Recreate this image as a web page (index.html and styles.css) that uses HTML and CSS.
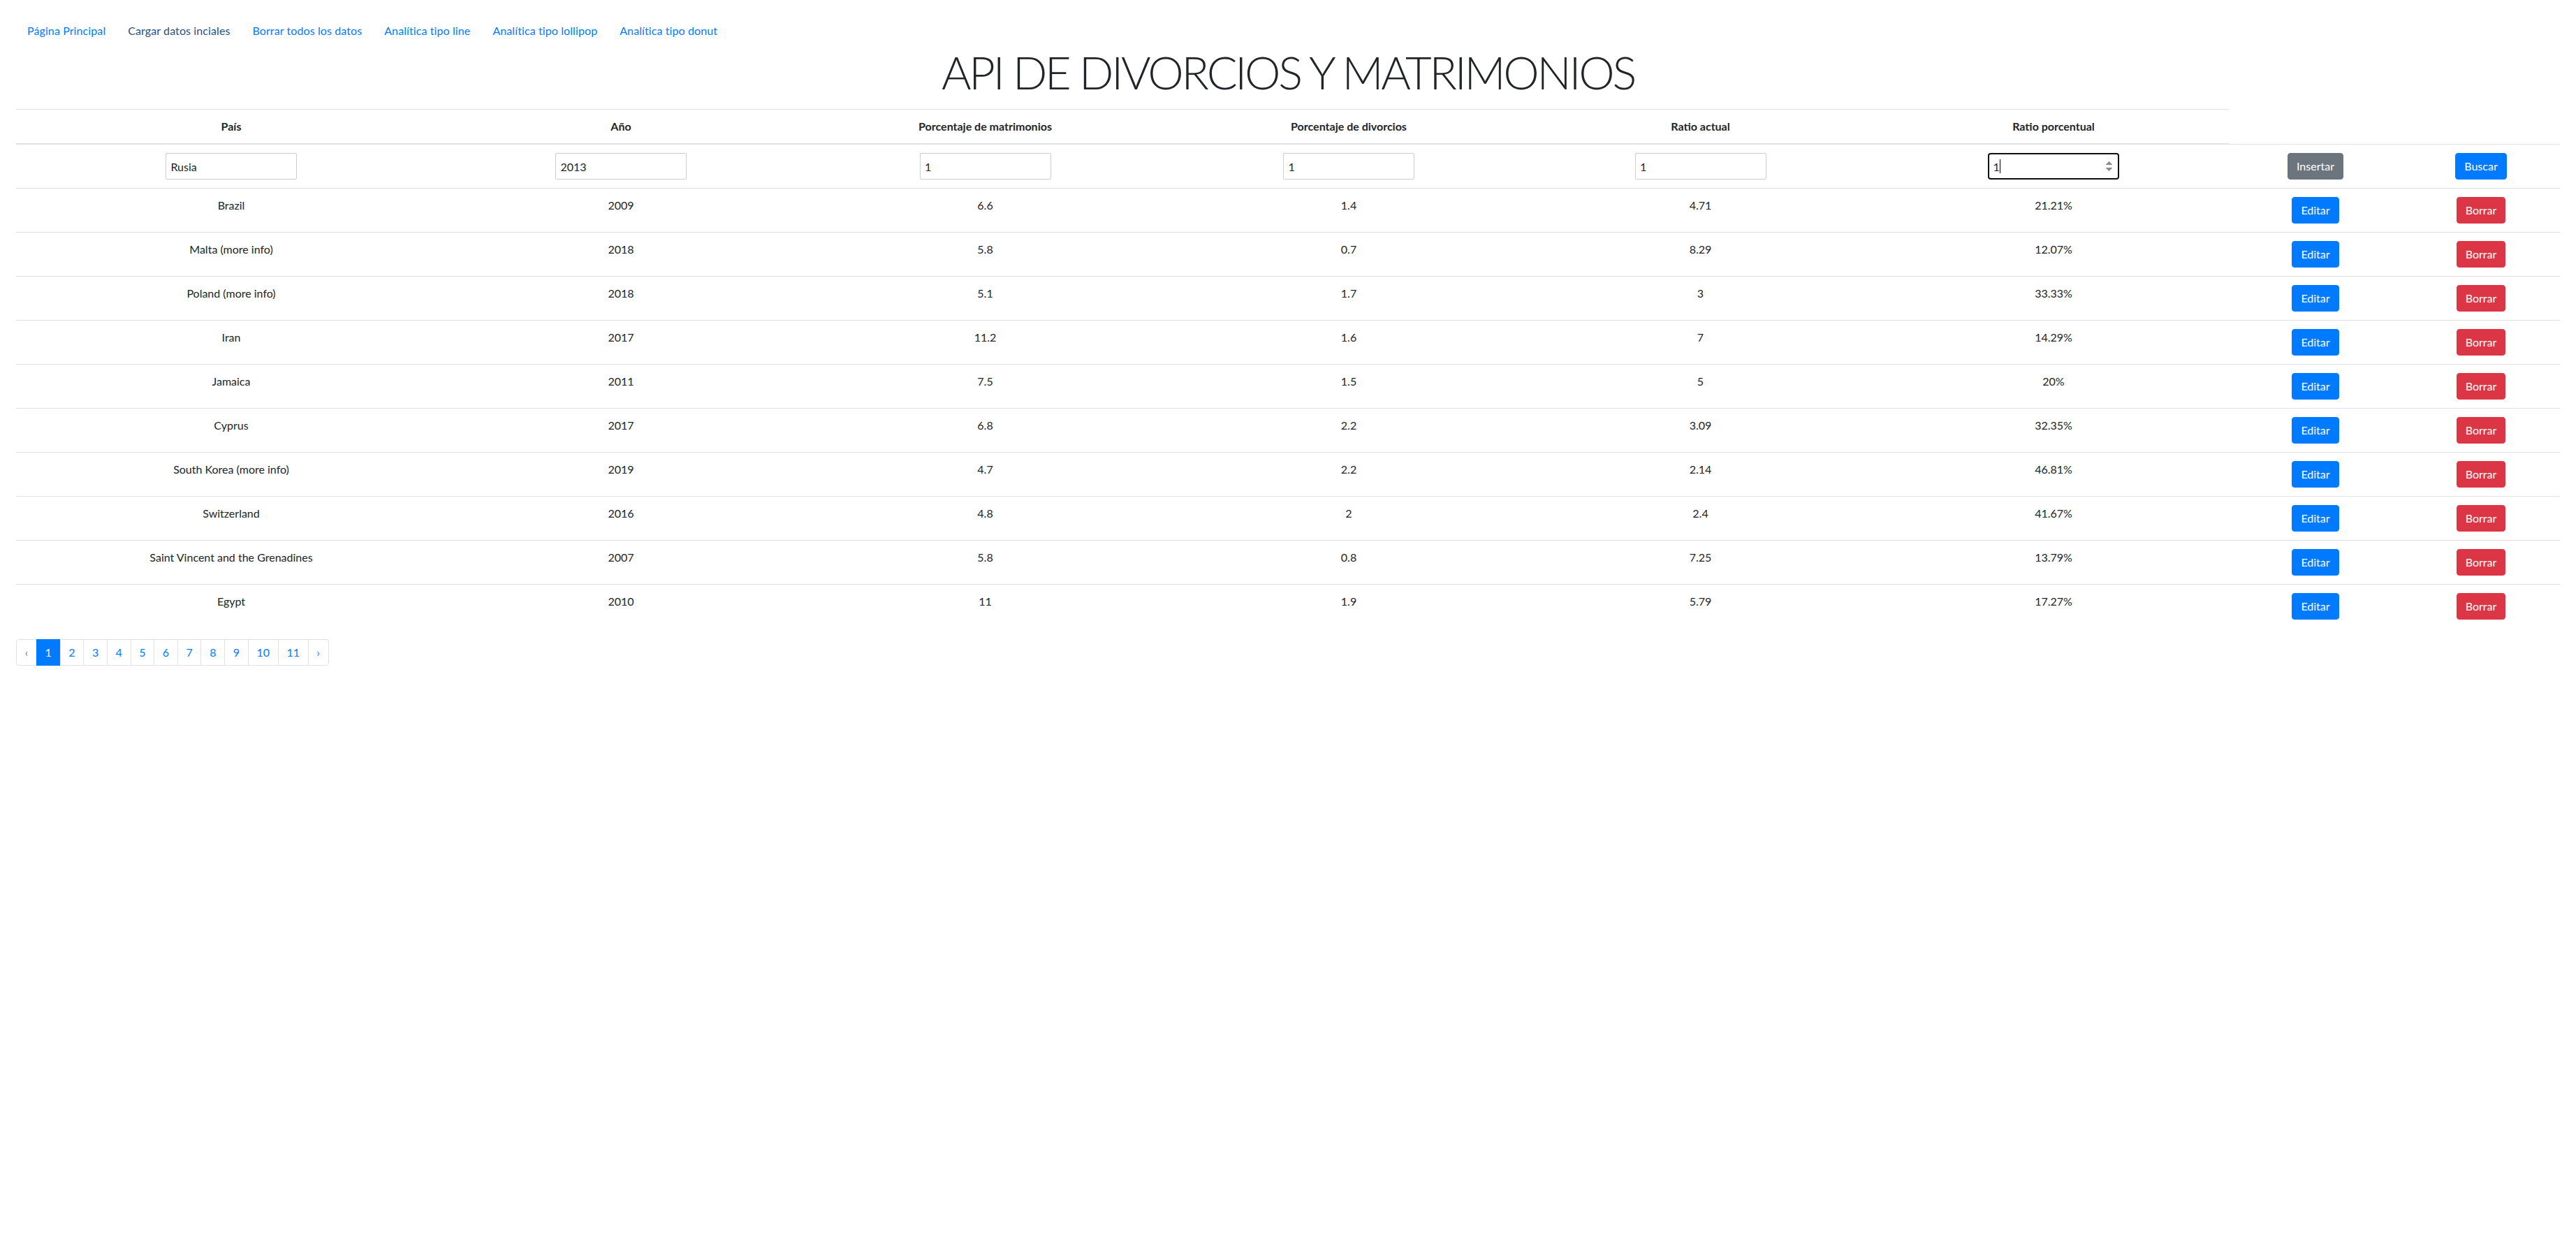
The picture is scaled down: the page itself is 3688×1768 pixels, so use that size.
FILE: index.html
```html
<!DOCTYPE html>
<html lang="es">
<head>
<meta charset="utf-8">
<title>API de divorcios y matrimonios</title>
<link rel="stylesheet" href="styles.css">
</head>
<body>
<div class="container">
  <ul class="nav">
    <li><a class="nav-link" href="#">Página Principal</a></li>
    <li><a class="nav-link nav-visited" href="#">Cargar datos inciales</a></li>
    <li><a class="nav-link" href="#">Borrar todos los datos</a></li>
    <li><a class="nav-link" href="#">Analítica tipo line</a></li>
    <li><a class="nav-link" href="#">Analítica tipo lollipop</a></li>
    <li><a class="nav-link" href="#">Analítica tipo donut</a></li>
  </ul>
  <h1 class="title">API DE DIVORCIOS Y MATRIMONIOS</h1>
  <table class="data-table">
    <colgroup>
      <col class="w1"><col class="w2"><col class="w3"><col class="w4"><col class="w5"><col class="w6"><col class="w7"><col class="w8">
    </colgroup>
    <thead>
      <tr><th>País</th><th>Año</th><th>Porcentaje de matrimonios</th><th>Porcentaje de divorcios</th><th>Ratio actual</th><th>Ratio porcentual</th></tr>
    </thead>
    <tbody>
      <tr>
        <td><input class="field" type="text" value="Rusia"></td>
        <td><input class="field" type="number" value="2013"></td>
        <td><input class="field" type="number" value="1"></td>
        <td><input class="field" type="number" value="1"></td>
        <td><input class="field" type="number" value="1"></td>
        <td><span class="num-wrap"><input class="field field-focus" type="number" value="1"><span class="caret"></span></span></td>
        <td><button class="btn btn-secondary">Insertar</button></td>
        <td><button class="btn btn-primary">Buscar</button></td>
      </tr>
      <tr><td>Brazil</td><td>2009</td><td>6.6</td><td>1.4</td><td>4.71</td><td>21.21%</td><td><button class="btn btn-primary">Editar</button></td><td><button class="btn btn-danger">Borrar</button></td></tr>
      <tr><td>Malta <span class="more">(more info)</span></td><td>2018</td><td>5.8</td><td>0.7</td><td>8.29</td><td>12.07%</td><td><button class="btn btn-primary">Editar</button></td><td><button class="btn btn-danger">Borrar</button></td></tr>
      <tr><td>Poland <span class="more">(more info)</span></td><td>2018</td><td>5.1</td><td>1.7</td><td>3</td><td>33.33%</td><td><button class="btn btn-primary">Editar</button></td><td><button class="btn btn-danger">Borrar</button></td></tr>
      <tr><td>Iran</td><td>2017</td><td>11.2</td><td>1.6</td><td>7</td><td>14.29%</td><td><button class="btn btn-primary">Editar</button></td><td><button class="btn btn-danger">Borrar</button></td></tr>
      <tr><td>Jamaica</td><td>2011</td><td>7.5</td><td>1.5</td><td>5</td><td>20%</td><td><button class="btn btn-primary">Editar</button></td><td><button class="btn btn-danger">Borrar</button></td></tr>
      <tr><td>Cyprus</td><td>2017</td><td>6.8</td><td>2.2</td><td>3.09</td><td>32.35%</td><td><button class="btn btn-primary">Editar</button></td><td><button class="btn btn-danger">Borrar</button></td></tr>
      <tr><td>South Korea <span class="more">(more info)</span></td><td>2019</td><td>4.7</td><td>2.2</td><td>2.14</td><td>46.81%</td><td><button class="btn btn-primary">Editar</button></td><td><button class="btn btn-danger">Borrar</button></td></tr>
      <tr><td>Switzerland</td><td>2016</td><td>4.8</td><td>2</td><td>2.4</td><td>41.67%</td><td><button class="btn btn-primary">Editar</button></td><td><button class="btn btn-danger">Borrar</button></td></tr>
      <tr><td>Saint Vincent and the Grenadines</td><td>2007</td><td>5.8</td><td>0.8</td><td>7.25</td><td>13.79%</td><td><button class="btn btn-primary">Editar</button></td><td><button class="btn btn-danger">Borrar</button></td></tr>
      <tr><td>Egypt</td><td>2010</td><td>11</td><td>1.9</td><td>5.79</td><td>17.27%</td><td><button class="btn btn-primary">Editar</button></td><td><button class="btn btn-danger">Borrar</button></td></tr>
    </tbody>
  </table>
  <ul class="pagination">
    <li class="page-item disabled"><a class="page-link" href="#">‹</a></li>
    <li class="page-item active"><a class="page-link" href="#">1</a></li>
    <li class="page-item"><a class="page-link" href="#">2</a></li>
    <li class="page-item"><a class="page-link" href="#">3</a></li>
    <li class="page-item"><a class="page-link" href="#">4</a></li>
    <li class="page-item"><a class="page-link" href="#">5</a></li>
    <li class="page-item"><a class="page-link" href="#">6</a></li>
    <li class="page-item"><a class="page-link" href="#">7</a></li>
    <li class="page-item"><a class="page-link" href="#">8</a></li>
    <li class="page-item"><a class="page-link" href="#">9</a></li>
    <li class="page-item"><a class="page-link" href="#">10</a></li>
    <li class="page-item"><a class="page-link" href="#">11</a></li>
    <li class="page-item"><a class="page-link" href="#">›</a></li>
  </ul>
</div>
</body>
</html>
```
FILE: styles.css
```css
*, *::before, *::after { box-sizing: border-box; }

html, body {
  margin: 0;
  background: #fff;
}

body {
  padding: 8px;
  font-family: "Lato", "Open Sans", "Liberation Sans", sans-serif;
  font-size: 16px;
  line-height: 1.5;
  color: #212529;
}

.container {
  padding: 0 15px;
}

.nav {
  display: flex;
  flex-wrap: wrap;
  list-style: none;
  margin: 16px 0 0 0;
  padding: 0;
}

.nav-link {
  display: block;
  padding: 8px 16px;
  color: #007bff;
  text-decoration: none;
  letter-spacing: 0.1px;
}

.nav-visited {
  color: #2a4f86;
}

.title {
  margin: 0 0 14px 0;
  text-align: center;
  font-weight: 300;
  font-size: 65px;
  line-height: 1.2;
  letter-spacing: -3.2px;
}

.data-table {
  width: 100%;
  table-layout: fixed;
  border-collapse: collapse;
  margin: 0 0 16px 0;
}

.w1 { width: 616px; }
.w2 { width: 500px; }
.w3 { width: 543px; }
.w4 { width: 498px; }
.w5 { width: 509px; }
.w6 { width: 502px; }
.w7 { width: 248px; }
.w8 { width: 226px; }

.data-table th,
.data-table td {
  padding: 12px;
  text-align: center;
  vertical-align: top;
  border-top: 1px solid #dee2e6;
}

.data-table thead th {
  vertical-align: bottom;
  border-bottom: 2px solid #dee2e6;
  font-weight: 700;
}

.field {
  display: inline-block;
  vertical-align: top;
  width: 188px;
  height: 38px;
  margin: 0;
  padding: 6.4px;
  border: 1px solid #ccc;
  border-radius: 2px;
  font-family: inherit;
  font-size: 16px;
  line-height: 24px;
  color: #212529;
  background: #fff;
}

.field-focus {
  border: 2px solid #101010;
  border-radius: 4px;
  padding: 5.4px;
  outline: none;
}

.field-focus::-webkit-inner-spin-button {
  opacity: 1;
}

.num-wrap {
  position: relative;
  display: inline-block;
  vertical-align: top;
}

.caret {
  position: absolute;
  left: 17px;
  top: 9px;
  width: 1px;
  height: 20px;
  background: #000;
}

.btn {
  display: inline-block;
  vertical-align: top;
  margin: 0;
  padding: 6px 12px;
  border: 1px solid transparent;
  border-radius: 4px;
  font-family: inherit;
  font-size: 16px;
  font-weight: 400;
  line-height: 24px;
  color: #fff;
  cursor: pointer;
}

.btn-primary { background: #007bff; border-color: #007bff; }
.btn-secondary { background: #6c757d; border-color: #6c757d; }
.btn-danger { background: #dc3545; border-color: #dc3545; }

.pagination {
  display: flex;
  list-style: none;
  margin: 0;
  padding: 0;
}

.page-link {
  display: block;
  margin-left: -1px;
  padding: 8px 11.7px;
  line-height: 20px;
  color: #007bff;
  background: #fff;
  border: 1px solid #dee2e6;
  text-decoration: none;
}

.page-item:first-child .page-link {
  margin-left: 0;
  border-radius: 4px 0 0 4px;
}

.page-item:last-child .page-link {
  border-radius: 0 4px 4px 0;
}

.page-item.active .page-link {
  color: #fff;
  background: #007bff;
  border-color: #007bff;
}

.page-item.disabled .page-link {
  color: #6c757d;
}
```
